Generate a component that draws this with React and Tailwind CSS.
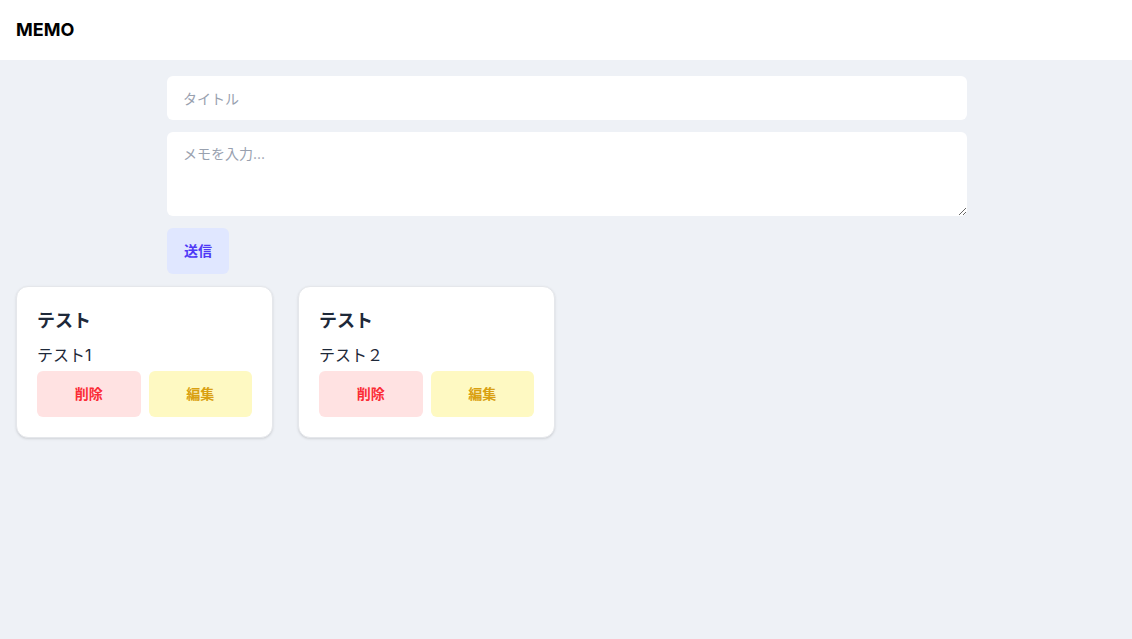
import React, { useState } from 'react';

const memos = [
  { id: 1, title: 'テスト', body: 'テスト1' },
  { id: 2, title: 'テスト', body: 'テスト２' },
];

const MemoCard = ({ memo }) => (
  <div className="w-[257px] bg-white rounded-xl border border-gray-200 shadow-sm p-5">
    <h2 className="text-lg font-bold text-gray-800">{memo.title}</h2>
    <p className="text-base text-gray-800 mt-2 leading-6">{memo.body}</p>
    <div className="flex gap-2 mt-1">
      <button className="flex-1 h-[46px] rounded-md bg-red-100 text-red-500 text-sm font-bold">
        削除
      </button>
      <button className="flex-1 h-[46px] rounded-md bg-yellow-100 text-[#d9a010] text-sm font-bold">
        編集
      </button>
    </div>
  </div>
);

export default function App() {
  const [title, setTitle] = useState('');
  const [body, setBody] = useState('');

  return (
    <div
      className="min-h-screen bg-[#eef1f6]"
      style={{ fontFamily: 'Inter, "Noto Sans CJK JP", sans-serif' }}
    >
      <header className="h-[60px] bg-white flex items-center px-4">
        <h1 className="text-lg font-bold text-black">MEMO</h1>
      </header>

      <div className="max-w-[800px] mx-auto pt-4 flex flex-col gap-3 translate-x-[1px]">
        <input
          value={title}
          onChange={(e) => setTitle(e.target.value)}
          placeholder="タイトル"
          className="h-11 w-full rounded-md bg-white px-4 text-sm placeholder-gray-400 outline-none"
        />
        <textarea
          value={body}
          onChange={(e) => setBody(e.target.value)}
          placeholder="メモを入力..."
          className="h-[84px] w-full rounded-md bg-white px-4 py-3 text-sm placeholder-gray-400 outline-none"
        />
        <div>
          <button className="h-[46px] w-[62px] rounded-md bg-indigo-100 text-indigo-600 text-sm font-bold">
            送信
          </button>
        </div>
      </div>

      <div className="flex flex-wrap gap-[25px] px-4 mt-3">
        {memos.map((memo) => (
          <MemoCard key={memo.id} memo={memo} />
        ))}
      </div>
    </div>
  );
}
